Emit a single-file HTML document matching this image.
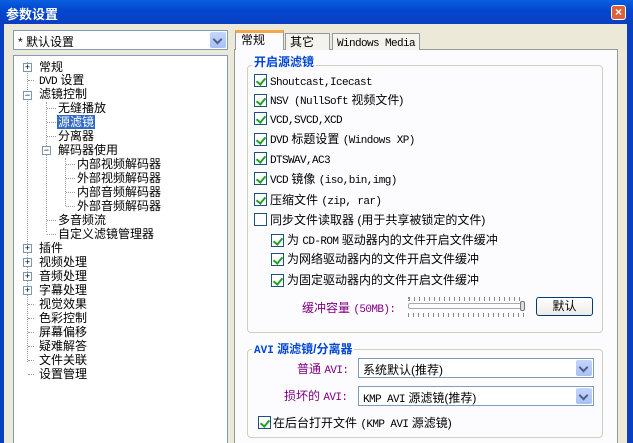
<!DOCTYPE html>
<html><head><meta charset="utf-8"><style>
*{margin:0;padding:0;box-sizing:border-box}
body{width:633px;height:443px;overflow:hidden;background:#ece9d8;position:relative;font:12px "Liberation Sans","Noto Sans CJK SC",sans-serif;color:#000}
.a{position:absolute;white-space:nowrap}
.m{font-family:"Liberation Mono",monospace;font-size:11px;letter-spacing:-0.6px}
.title{left:0;top:0;width:633px;height:24px;background:linear-gradient(#0a5fe0,#0348d0 40%,#0a3fc0);color:#fff;font-weight:bold;font-size:13px;padding:4px 0 0 6px}
.cb{position:absolute;width:13px;height:13px;border:1px solid #1c5180;background:#fff}
.cb.c::after{content:"";position:absolute;left:3px;top:1px;width:4px;height:7px;border:solid #21a121;border-width:0 2px 2px 0;transform:rotate(40deg)}
.combo{position:absolute;background:#fff;border:1px solid #7f9db9;height:20px;padding:2px 4px}
.arrow{position:absolute;right:1px;top:1px;width:16px;height:16px;background:linear-gradient(#c6d6fb,#a8c0f4);border-radius:2px}
.arrow::after{content:"";position:absolute;left:4px;top:4px;width:5px;height:5px;border:solid #4d6185;border-width:0 2px 2px 0;transform:rotate(45deg)}
.grp{position:absolute;border:1px solid #d0d0bf;border-radius:4px}
.gt{position:absolute;background:#fcfcfe;color:#0046d5;font-weight:bold;padding:0 2px}
.t{position:absolute;white-space:nowrap;line-height:14px}
.pl{position:absolute;width:9px;height:9px;border:1px solid #7a98af;background:#fff;font-size:9px;line-height:7px;text-align:center}
.dl{position:absolute;border-top:1px dotted #999;width:6px}
.pur{color:#800080}
</style></head><body>
<div class="a title">参数设置</div>
<div class="a" style="left:611px;top:5px;width:15px;height:15px;background:#e0603a;border:1px solid #fff;border-radius:3px;color:#fff;font-size:12px;line-height:12px;text-align:center;font-weight:bold">×</div>
<div class="a" style="left:0;top:24px;width:4px;height:419px;background:#0a3fc0"></div>
<div class="a" style="left:624px;top:24px;width:9px;height:419px;background:#0a3fc0"></div>
<div class="a" style="left:624px;top:24px;width:3px;height:419px;background:#ece9d8"></div>

<div class="combo" style="left:13px;top:30px;width:215px;height:20px">* 默认设置<div class="arrow"></div></div>
<div class="a" style="left:13px;top:55px;width:215px;height:388px;background:#fff;border:1px solid #7f9db9;border-bottom:none"></div>

<div class="a" style="left:27px;top:62px;height:300px;border-left:1px dotted #999"></div>
<div class="a" style="left:46px;top:102px;height:130px;border-left:1px dotted #999"></div>
<div class="a" style="left:65px;top:158px;height:48px;border-left:1px dotted #999"></div>

<div class="pl" style="left:23px;top:63px">+</div><div class="t" style="left:39px;top:60px">常规</div>
<div class="dl" style="left:28px;top:80px"></div><div class="t" style="left:39px;top:73px"><span class="m">DVD</span> 设置</div>
<div class="pl" style="left:23px;top:91px">−</div><div class="t" style="left:39px;top:87px">滤镜控制</div>
<div class="dl" style="left:47px;top:108px;width:9px"></div><div class="t" style="left:58px;top:101px">无缝播放</div>
<div class="dl" style="left:47px;top:122px;width:9px"></div><div class="t" style="left:57px;top:115px;background:#316ac5;color:#fff;padding:0 1px">源滤镜</div>
<div class="dl" style="left:47px;top:136px;width:9px"></div><div class="t" style="left:58px;top:129px">分离器</div>
<div class="pl" style="left:42px;top:146px">−</div><div class="t" style="left:58px;top:143px">解码器使用</div>
<div class="dl" style="left:66px;top:164px;width:9px"></div><div class="t" style="left:77px;top:157px">内部视频解码器</div>
<div class="dl" style="left:66px;top:178px;width:9px"></div><div class="t" style="left:77px;top:171px">外部视频解码器</div>
<div class="dl" style="left:66px;top:192px;width:9px"></div><div class="t" style="left:77px;top:185px">内部音频解码器</div>
<div class="dl" style="left:66px;top:206px;width:9px"></div><div class="t" style="left:77px;top:199px">外部音频解码器</div>
<div class="dl" style="left:47px;top:220px;width:9px"></div><div class="t" style="left:58px;top:213px">多音频流</div>
<div class="dl" style="left:47px;top:234px;width:9px"></div><div class="t" style="left:58px;top:227px">自定义滤镜管理器</div>
<div class="pl" style="left:23px;top:244px">+</div><div class="t" style="left:39px;top:241px">插件</div>
<div class="pl" style="left:23px;top:258px">+</div><div class="t" style="left:39px;top:255px">视频处理</div>
<div class="pl" style="left:23px;top:272px">+</div><div class="t" style="left:39px;top:269px">音频处理</div>
<div class="pl" style="left:23px;top:286px">+</div><div class="t" style="left:39px;top:283px">字幕处理</div>
<div class="dl" style="left:28px;top:304px"></div><div class="t" style="left:39px;top:297px">视觉效果</div>
<div class="dl" style="left:28px;top:318px"></div><div class="t" style="left:39px;top:311px">色彩控制</div>
<div class="dl" style="left:28px;top:332px"></div><div class="t" style="left:39px;top:325px">屏幕偏移</div>
<div class="dl" style="left:28px;top:346px"></div><div class="t" style="left:39px;top:339px">疑难解答</div>
<div class="dl" style="left:28px;top:360px"></div><div class="t" style="left:39px;top:353px">文件关联</div>
<div class="dl" style="left:28px;top:374px"></div><div class="t" style="left:39px;top:367px">设置管理</div>

<!-- tabs -->
<div class="a" style="left:234px;top:49px;width:384px;height:394px;background:#fcfcfe;border:1px solid #919b9c;border-bottom:none"></div>
<div class="a" style="left:285px;top:33px;width:45px;height:17px;background:#f4f3ee;border:1px solid #919b9c;border-bottom:none;padding:0 4px;line-height:16px">其它</div>
<div class="a" style="left:332px;top:33px;width:88px;height:17px;background:#f4f3ee;border:1px solid #919b9c;border-bottom:none;padding:0 4px;line-height:16px"><span class="m">Windows Media</span></div>
<div class="a" style="left:235px;top:30px;width:49px;height:20px;background:#fcfcfe;border:1px solid #919b9c;border-top:3px solid #f3a84a;border-bottom:none;padding:0 5px;line-height:15px">常规</div>

<div class="grp" style="left:247px;top:65px;width:356px;height:268px"></div>
<div class="gt" style="left:252px;top:53px">开启源滤镜</div>
<div class="cb c" style="left:254px;top:74px"></div><div class="t" style="left:270px;top:74px"><span class="m">Shoutcast,Icecast</span></div>
<div class="cb c" style="left:254px;top:94px"></div><div class="t" style="left:270px;top:93px"><span class="m">NSV (NullSoft</span> 视频文件)</div>
<div class="cb c" style="left:254px;top:112px"></div><div class="t" style="left:270px;top:112px"><span class="m">VCD,SVCD,XCD</span></div>
<div class="cb c" style="left:254px;top:133px"></div><div class="t" style="left:270px;top:132px"><span class="m">DVD</span> 标题设置 <span class="m">(Windows XP)</span></div>
<div class="cb c" style="left:254px;top:152px"></div><div class="t" style="left:270px;top:152px"><span class="m">DTSWAV,AC3</span></div>
<div class="cb c" style="left:254px;top:172px"></div><div class="t" style="left:270px;top:172px"><span class="m">VCD</span> 镜像 <span class="m">(iso,bin,img)</span></div>
<div class="cb c" style="left:254px;top:193px"></div><div class="t" style="left:270px;top:193px">压缩文件 <span class="m">(zip, rar)</span></div>
<div class="cb" style="left:254px;top:213px"></div><div class="t" style="left:270px;top:213px">同步文件读取器 (用于共享被锁定的文件)</div>
<div class="cb c" style="left:271px;top:234px"></div><div class="t" style="left:287px;top:233px">为 <span class="m">CD-ROM</span> 驱动器内的文件开启文件缓冲</div>
<div class="cb c" style="left:271px;top:253px"></div><div class="t" style="left:287px;top:252px">为网络驱动器内的文件开启文件缓冲</div>
<div class="cb c" style="left:271px;top:274px"></div><div class="t" style="left:287px;top:273px">为固定驱动器内的文件开启文件缓冲</div>
<div class="t pur" style="left:302px;top:301px">缓冲容量 <span class="m">(50MB):</span></div>
<div class="a" style="left:408px;top:297px;width:116px;height:4px;border-left:1px dotted #888;background:repeating-linear-gradient(90deg,#888 0 1px,transparent 1px 5px)"></div>
<div class="a" style="left:408px;top:303px;width:115px;height:6px;border:1px solid #aaa;border-right:none;border-radius:2px"></div>
<div class="a" style="left:520px;top:301px;width:5px;height:10px;background:#ddd;border:1px solid #777;border-radius:2px"></div>
<div class="a" style="left:408px;top:313px;width:116px;height:4px;background:repeating-linear-gradient(90deg,#888 0 1px,transparent 1px 5px)"></div>
<div class="a" style="left:536px;top:297px;width:57px;height:19px;border:1px solid #003c74;border-radius:3px;background:linear-gradient(#fff,#ecebe6);text-align:center;line-height:16px">默认</div>

<div class="grp" style="left:247px;top:349px;width:356px;height:89px"></div>
<div class="gt" style="left:252px;top:340px"><span style="font-family:'Liberation Mono';font-size:11px">AVI</span> 源滤镜/分离器</div>
<div class="t pur" style="left:297px;top:362px">普通 <span class="m">AVI:</span></div>
<div class="combo" style="left:358px;top:358px;width:236px">系统默认(推荐)<div class="arrow"></div></div>
<div class="t pur" style="left:284px;top:389px">损坏的 <span class="m">AVI:</span></div>
<div class="combo" style="left:358px;top:386px;width:236px"><span class="m">KMP AVI</span> 源滤镜(推荐)<div class="arrow"></div></div>
<div class="cb c" style="left:258px;top:416px"></div><div class="t" style="left:273px;top:416px">在后台打开文件 <span class="m">(KMP AVI</span> 源滤镜)</div>
</body></html>
